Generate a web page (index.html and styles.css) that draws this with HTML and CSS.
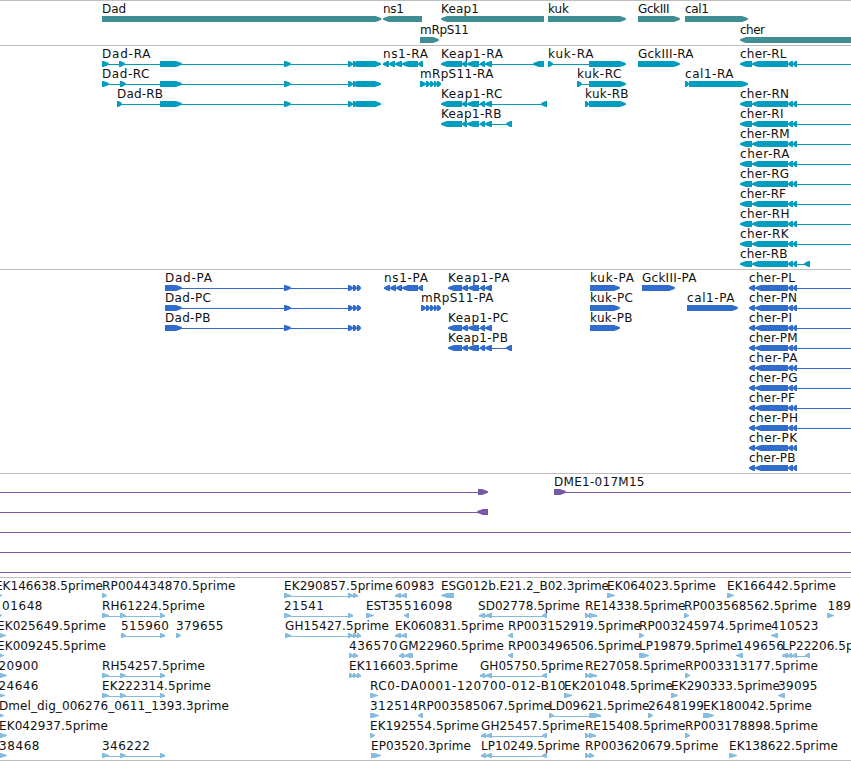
FILE: index.html
```
<!DOCTYPE html>
<html>
<head>
<meta charset="utf-8">
	<title>Gene tracks</title>
<link rel="stylesheet" href="styles.css">
</head>
<body>
	<div id="browser">
		<div class="track genes" id="genes"></div>
		<div class="track transcripts" id="transcripts"></div>
		<div class="track cds" id="cds"></div>
		<div class="track bac" id="bac"></div>
		<div class="track est" id="est"></div>
	</div>
<script src="tracks.js"></script>
</body>
</html>
```
FILE: styles.css
```
*{
	margin: 0;
	padding: 0;
}
body{
	background: #fff;
	overflow: hidden;
}
#browser{
	width: 851px;
	overflow: hidden;
}
.track{
	border-top: 1px solid #bebebe;
	padding-bottom: 3px;
}
.row{
	display: block;
	width: 851px;
	height: 20px;
	overflow: visible;
}
.row text{
	font-family: "DejaVu Sans", sans-serif;
	font-size: 12px;
	fill: #111;
}
.genes{
	fill: #3e8e94;
	padding-bottom: 2px;
}
.genes .row{
	height: 21px;
}
.transcripts{
	fill: #009dbf;
}
.cds{
	fill: #306ccb;
}
.bac{
	fill: #7657a8;
}
.est{
	fill: #86bcdf;
	padding-bottom: 2px;
	border-bottom: 1px solid #bebebe;
}
```
FILE: tracks.js
```
// feature: [label, label start, label end, direction, exons, line end]
var END = 860;
var dadTail = [[160,182],[284,291],[348,353],[353,357],[356,381]];
var dadCds = [[165,182],[284,291],[348,353],[353,357],[357,361]];
var keap = [[441,462],[462,467],[467,479],[480,485],[485,492]];
var keapCds = [[448,462],[462,468],[468,479],[480,485],[485,492]];
var cher = [[740,752],[752,788],[788,793],[793,797]];
var cherCds = [[749,755],[755,788],[788,793],[793,797]];
var rh = [[102,109],[120,126],[160,165]];

function cherRow(name, end){
	return ['cher-' + name, 740, end, 'L', cher, END];
}
function cherCdsRow(name, end, line){
	return ['cher-' + name, 749, end, 'L', cherCds, line];
}

var tracks = {
	genes: [
		[
			['Dad', 102, 126, 'R', [[102,381.5]]],
			['ns1', 383, 404, 'L', [[383,422]]],
			['Keap1', 441, 479, 'L', [[441,544]]],
			['kuk', 548, 569, 'R', [[548,626]]],
			['GckIII', 638, 669.5, 'R', [[638,680]]],
			['cal1', 685, 709, 'R', [[685,748]]]
		],
		[
			['mRpS11', 420, 469, 'R', [[420,439]]],
			['cher', 740, 765, 'L', [[740,END]]]
		]
	],
	transcripts: [
		[
			['Dad-RA', 102, 150.5, 'R', [[102,109],[119,125]].concat(dadTail)],
			['ns1-RA', 383, 428, 'L', [[383,389],[389,395],[395,402],[402,418],[418,423]]],
			['Keap1-RA', 441, 503, 'L', keap.concat([[533,544]])],
			['kuk-RA', 548, 593.5, 'R', [[548,553],[589,626]]],
			['GckIII-RA', 638, 693.5, 'R', [[638,680]]],
			cherRow('RL', 786.5)
		],
		[
			['Dad-RC', 102, 149.5, 'R', [[102,109],[120,126]].concat(dadTail)],
			['mRpS11-RA', 420, 493.5, 'R', [[420,426],[426,430],[430,434],[434,437],[437,441]]],
			['kuk-RC', 577, 621.5, 'R', [[577,582],[589,626]]],
			['cal1-RA', 685, 733.5, 'R', [[685,689],[689,748]]]
		],
		[
			['Dad-RB', 117, 163, 'R', [[117,122]].concat(dadTail)],
			['Keap1-RC', 441, 502.5, 'L', keap.concat([[541,547]])],
			['kuk-RB', 585, 628.5, 'R', [[585,589],[589,626]]],
			cherRow('RN', 789)
		],
		[
			['Keap1-RB', 441, 501.5, 'L', keap.concat([[506,512]])],
			cherRow('RI', 783.5)
		],
		[cherRow('RM', 789.5)],
		[cherRow('RA', 789.5)],
		[cherRow('RG', 789)],
		[cherRow('RF', 786)],
		[cherRow('RH', 789.5)],
		[cherRow('RK', 788.5)],
		[['cher-RB', 740, 787.5, 'L', cher.concat([[804,810]])]]
	],
	cds: [
		[
			['Dad-PA', 165, 212, 'R', dadCds],
			['ns1-PA', 384, 428, 'L', [[384,390],[390,396],[396,402],[402,418],[418,423]]],
			['Keap1-PA', 448, 509.5, 'L', keapCds],
			['kuk-PA', 590, 634, 'R', [[590,620]]],
			['GckIII-PA', 642, 696.5, 'R', [[642,675]]],
			cherCdsRow('PL', 795, END)
		],
		[
			['Dad-PC', 165, 211, 'R', dadCds],
			['mRpS11-PA', 421, 493.5, 'R', [[421,426],[426,430],[430,434],[434,437],[437,441]]],
			['kuk-PC', 590, 633, 'R', [[590,620]]],
			['cal1-PA', 687, 734.5, 'R', [[687,738]]],
			cherCdsRow('PN', 797, END)
		],
		[
			['Dad-PB', 165, 210.5, 'R', dadCds],
			['Keap1-PC', 448, 508.5, 'L', keapCds],
			['kuk-PB', 590, 632.5, 'R', [[590,620]]],
			cherCdsRow('PI', 792, END)
		],
		[
			['Keap1-PB', 448, 508, 'L', keapCds.concat([[506,512]])],
			cherCdsRow('PM', 797.5, END)
		],
		[cherCdsRow('PA', 797.5, END)],
		[cherCdsRow('PG', 797.5, END)],
		[cherCdsRow('PF', 795, END)],
		[cherCdsRow('PH', 798, END)],
		[cherCdsRow('PK', 797, 797)],
		[cherCdsRow('PB', 795.5, 797)]
	],
	bac: [
		[
			['', 0, 0, 'R', [[-20,-10],[478,488]]],
			['DME1-017M15', 554, 644.5, 'R', [[554,566]], END]
		],
		[['', 0, 0, 'L', [[-20,-10],[477,488]]]],
		[['', 0, 0, 'R', [[-20,-10]], END]],
		[['', 0, 0, 'R', [[-20,-10]], END]],
		[['', 0, 0, 'R', [[-20,-10]], END]]
	],
	est: [
		[
			['EK146638.5prime', -5, 103, 'R', [[-4,2]]],
			['RP004434870.5prime', 102, 235.5, 'R', [[102,107]]],
			['EK290857.5prime', 284, 393, 'R', [[284,291],[348,353],[353,358]]],
			['60983', 395, 434.5, 'L', [[395,401],[401,407]]],
			['ESG012b.E21.2_B02.3prime', 441, 609, 'L', [[441,454]]],
			['EK064023.5prime', 607, 716, 'R', [[607,615]]],
			['EK166442.5prime', 727, 836, 'R', [[727,734]]]
		],
		[
			['01648', 2, 42.5, 'R', [[-4,2]]],
			['RH61224.5prime', 102, 205, 'R', rh],
			['21541', 284, 324, 'R', [[284,291],[348,353]]],
			['EST35', 366, 403, 'R', [[366,374]]],
			['516098', 404, 452.5, 'L', [[404,409]]],
			['SD02778.5prime', 478, 580, 'L', [[479,485],[485,492],[542,547]]],
			['RE14338.5prime', 585, 685.5, 'R', [[585,589],[589,597]]],
			['RP003568562.5prime', 684, 817, 'R', [[684,689]]],
			['189', 827.5, 851, 'R', [[827,834]]]
		],
		[
			['EK025649.5prime', -3, 106, 'R', [[-3,6]]],
			['515960', 121, 169, 'R', [[121,126],[160,165]]],
			['379655', 176, 223.5, 'R', [[176,181]]],
			['GH15427.5prime', 285, 389, 'R', [[285,291],[348,353],[353,357],[357,361]]],
			['EK060831.5prime', 395, 504, 'L', [[395,401],[401,407]]],
			['RP003152919.5prime', 508, 641, 'L', [[508,513]]],
			['RP003245974.5prime', 639, 772, 'R', [[639,644]]],
			['410523', 771, 818.5, 'L', [[771,778]]]
		],
		[
			['EK009245.5prime', -3, 106, 'R', [[-3,4]]],
			['436570', 349, 397.5, 'R', [[349,353],[353,358]]],
			['GM22960.5prime', 399, 504, 'L', [[399,404],[404,413]]],
			['RP003496506.5prime', 508, 641, 'L', [[508,513]]],
			['LP19879.5prime', 639, 737.5, 'R', [[639,649]]],
			['149656', 736, 784, 'L', [[736,743]]],
			['LP22206.5prime', 782, 881, 'L', [[782,788],[788,792],[792,797],[805,810]]]
		],
		[
			['20900', -1.5, 38.5, 'R', [[-3,7]]],
			['RH54257.5prime', 102, 205, 'R', rh],
			['EK116603.5prime', 349, 458, 'R', [[349,353],[353,357],[357,361]]],
			['GH05750.5prime', 480, 583.5, 'L', [[480,485],[485,492],[542,547]]],
			['RE27058.5prime', 585, 685.5, 'R', [[585,589],[589,597]]],
			['RP003313177.5prime', 685, 818, 'R', [[685,690]]]
		],
		[
			['24646', -1.5, 38.5, 'R', [[-3,5]]],
			['EK222314.5prime', 102, 211, 'R', rh],
			['RC0-DA0001-120700-012-B10', 370, 565.5, 'R', [[370,378]]],
			['EK201048.5prime', 564, 673, 'R', [[564,572]]],
			['EK290333.5prime', 671, 780, 'R', [[671,678]]],
			['39095', 778, 817.5, 'L', [[778,785]]]
		],
		[
			['Dmel_dig_006276_0611_1393.3prime', -1, 229, 'R', [[-3,4]]],
			['312514', 370, 418, 'R', [[370,379]]],
			['RP003585067.5prime', 418, 551, 'L', [[418,423]]],
			['LD09621.5prime', 549, 649.5, 'R', [[549,554],[589,601]]],
			['2648199', 648, 704, 'R', [[648,653]]],
			['EK180042.5prime', 703, 812, 'R', [[703,714]]]
		],
		[
			['EK042937.5prime', -1, 108, 'R', [[-3,7]]],
			['EK192554.5prime', 370, 479, 'R', [[370,375]]],
			['GH25457.5prime', 481, 585, 'L', [[481,486],[486,492],[542,547]]],
			['RE15408.5prime', 585, 685.5, 'R', [[585,589],[589,596]]],
			['RP003178898.5prime', 685, 818, 'R', [[685,690]]]
		],
		[
			['38468', -1, 39.5, 'R', [[-3,7]]],
			['346222', 102, 150, 'R', rh],
			['EP03520.3prime', 371, 471, 'R', [[371,381]]],
			['LP10249.5prime', 481, 580, 'L', [[481,486],[486,492],[542,547]]],
			['RP003620679.5prime', 585, 718.5, 'R', [[585,589],[589,594]]],
			['EK138622.5prime', 729, 838, 'R', [[729,737]]]
		]
	]
};

function arrow(a, b, dir, h){
	var w = b - a;
	var head = w > 8 ? 6 : w - 1.5;
	var top = 15, bottom = top + h, mid = top + h / 2;
	var tip = dir == 'R' ? b : a;
	var back = dir == 'R' ? a : b;
	var s = dir == 'R' ? -1 : 1;
	var p = [
		[back,top],
		[tip + s * head,top],
		[tip + s * head * 0.4,top + 1.2],
		[tip,mid - 0.6],
		[tip,mid + 0.6],
		[tip + s * head * 0.4,bottom - 1.2],
		[tip + s * head,bottom],
		[back,bottom]
	];
	return '<polygon points="' + p.join(' ') + '"/>';
}
function drawFeature(f, h){
	var exons = f[4];
	var start = exons[0][0];
	var end = f[5] || exons[exons.length - 1][1];
	var out = '';
	if(exons.length > 1 || f[5]){
		out += '<rect x="' + start + '" y="18" width="' + (end - start) + '" height="1"/>';
	}
	for(var i = 0;i < exons.length; i++){
		out += arrow(exons[i][0], exons[i][1], f[3], h);
	}
	if(f[0]){
		out += '<text x="' + f[1] + '" y="12" textLength="' + (f[2] - f[1]) + '">' + f[0] + '</text>';
	}
	return out;
}
for(var id in tracks){
	var html = '';
	var h = id == 'est' ? 5 : 6;
	for(var r = 0;r < tracks[id].length; r++){
		html += '<svg class="row">';
		for(var n = 0;n < tracks[id][r].length; n++){
			html += drawFeature(tracks[id][r][n], h);
		}
		html += '</svg>';
	}
	document.getElementById(id).innerHTML = html;
}
```
